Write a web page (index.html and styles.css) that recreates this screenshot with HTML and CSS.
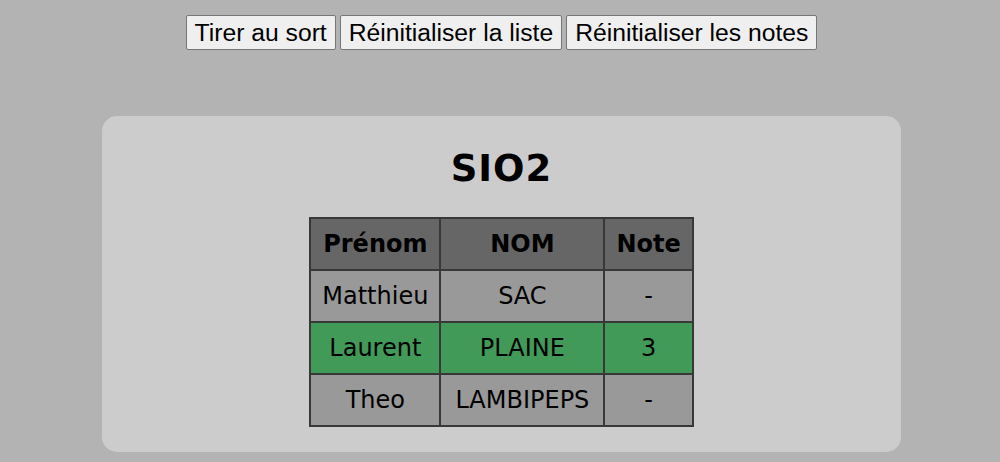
FILE: index.html
```html
<!DOCTYPE html>
<html lang="fr">
<head>
<meta charset="utf-8">
<title>Tirage</title>
<link rel="stylesheet" href="styles.css">
</head>
<body>
<div class="page">
  <div class="actions">
    <button class="btn">Tirer au sort</button>
    <button class="btn">Réinitialiser la liste</button>
    <button class="btn">Réinitialiser les notes</button>
  </div>
  <section class="card">
    <h1 class="title">SIO2</h1>
    <table class="list">
      <thead>
        <tr><th class="c1">Prénom</th><th class="c2">NOM</th><th class="c3">Note</th></tr>
      </thead>
      <tbody>
        <tr><td>Matthieu</td><td>SAC</td><td>-</td></tr>
        <tr class="picked"><td>Laurent</td><td>PLAINE</td><td>3</td></tr>
        <tr><td>Theo</td><td>LAMBIPEPS</td><td>-</td></tr>
      </tbody>
    </table>
  </section>
</div>
</body>
</html>
```

FILE: styles.css
```css
html, body {
  margin: 0;
  padding: 0;
  background: #b3b3b3;
}
.page {
  padding: 15px 0 0 3px;
  font-family: "DejaVu Sans", Verdana, sans-serif;
}
.actions {
  display: flex;
  justify-content: center;
  gap: 4px;
}
.btn {
  font-family: "Liberation Sans", Arial, sans-serif;
  font-size: 24.7px;
  line-height: 29px;
  padding: 2px 8px;
  border: 1px solid #767676;
  border-radius: 2px;
  background: #efefef;
  color: #000;
}
.card {
  width: 799px;
  box-sizing: border-box;
  margin: 66px auto 0;
  background: #cccccc;
  border-radius: 15px;
  padding: 32px 0 25px;
  display: flex;
  flex-direction: column;
  align-items: center;
}
.title {
  margin: 0 0 27px;
  font-size: 37px;
  line-height: 42px;
  letter-spacing: 1px;
  font-weight: bold;
}
.list {
  border-collapse: collapse;
  font-size: 24px;
  line-height: 28px;
}
.list th, .list td {
  border: 2px solid #383838;
  padding: 11px 11px;
  text-align: center;
  background: #999999;
}
.list .c1 { width: 106px; }
.list .c2 { width: 140px; }
.list .c3 { width: 64px; }
.list th {
  background: #666666;
  font-weight: bold;
}
.list tr.picked td {
  background: #429a59;
}
```
